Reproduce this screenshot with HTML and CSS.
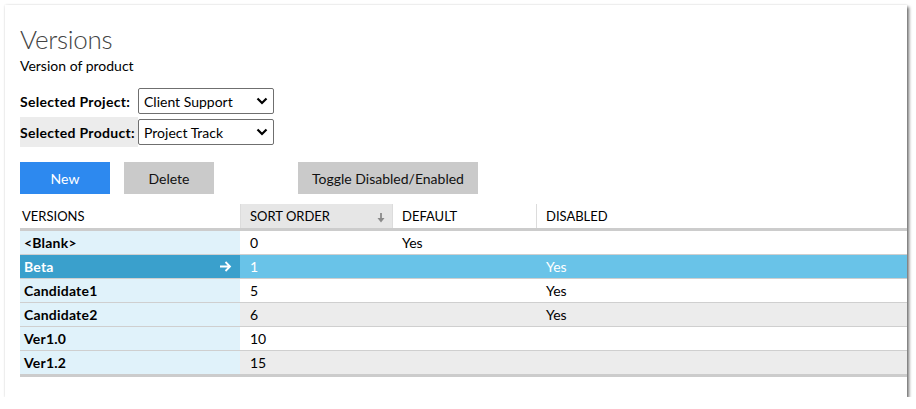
FILE: index.html
```html
<!DOCTYPE html>
<html>
<head>
<meta charset="utf-8">
<link rel="stylesheet" href="styles.css">
</head>
<body>
<div class="panel">
  <h1 class="title">Versions</h1>
  <div class="subtitle">Version of product</div>
  <div class="filters">
    <div class="filter-row">
      <label class="filter-label">Selected Project:</label>
      <div class="select">
        <span>Client Support</span>
        <svg class="chev" width="12" height="8" viewBox="0 0 12 8"><path d="M1.5 1.5 L6 6 L10.5 1.5" fill="none" stroke="#000" stroke-width="2.2"/></svg>
      </div>
    </div>
    <div class="filter-row">
      <label class="filter-label hover">Selected Product:</label>
      <div class="select">
        <span>Project Track</span>
        <svg class="chev" width="12" height="8" viewBox="0 0 12 8"><path d="M1.5 1.5 L6 6 L10.5 1.5" fill="none" stroke="#000" stroke-width="2.2"/></svg>
      </div>
    </div>
  </div>
  <div class="toolbar">
    <button class="btn btn-primary">New</button>
    <button class="btn">Delete</button>
    <button class="btn btn-toggle">Toggle Disabled/Enabled</button>
  </div>
  <div class="grid">
    <div class="row head">
      <div class="c c1">VERSIONS</div>
      <div class="c c2 sorted">SORT ORDER<svg class="sort" width="10" height="12" viewBox="0 0 10 12"><path d="M5 1 V9" fill="none" stroke="#8a8a8a" stroke-width="1.8"/><path d="M1.5 6 L5 10.5 L8.5 6 Z" fill="#8a8a8a"/></svg></div>
      <div class="c c3">DEFAULT</div>
      <div class="c c4">DISABLED</div>
    </div>
    <div class="row">
      <div class="c c1">&lt;Blank&gt;</div>
      <div class="c c2">0</div>
      <div class="c c3">Yes</div>
      <div class="c c4"></div>
    </div>
    <div class="row sel">
      <div class="c c1">Beta<svg class="arrow" width="13" height="11" viewBox="0 0 13 11"><path d="M1 5.5 H11 M6.5 1 L11 5.5 L6.5 10" fill="none" stroke="#fff" stroke-width="1.8"/></svg></div>
      <div class="c c2">1</div>
      <div class="c c3"></div>
      <div class="c c4">Yes</div>
    </div>
    <div class="row">
      <div class="c c1">Candidate1</div>
      <div class="c c2">5</div>
      <div class="c c3"></div>
      <div class="c c4">Yes</div>
    </div>
    <div class="row alt">
      <div class="c c1">Candidate2</div>
      <div class="c c2">6</div>
      <div class="c c3"></div>
      <div class="c c4">Yes</div>
    </div>
    <div class="row">
      <div class="c c1">Ver1.0</div>
      <div class="c c2">10</div>
      <div class="c c3"></div>
      <div class="c c4"></div>
    </div>
    <div class="row alt last">
      <div class="c c1">Ver1.2</div>
      <div class="c c2">15</div>
      <div class="c c3"></div>
      <div class="c c4"></div>
    </div>
  </div>
</div>
</body>
</html>
```
FILE: styles.css
```css
* { box-sizing: border-box; }
html, body { margin: 0; padding: 0; background: #fff; }
body {
  padding: 5px 0 0 5px;
  font-family: Lato, "Open Sans", sans-serif;
  color: #000;
}
.panel {
  width: 902px;
  height: 392px;
  background: #fff;
  padding: 17px 0 0 15px;
  box-shadow: 2px 2px 3px rgba(0,0,0,0.55), 0 0 2px rgba(0,0,0,0.12);
}
.title {
  margin: 0;
  font-size: 26px;
  letter-spacing: -0.3px;
  font-weight: 300;
  color: #444;
  line-height: 34px;
}
.subtitle {
  font-size: 14px;
  line-height: 18px;
  margin-top: 1px;
}
.filters {
  margin-top: 11px;
  display: flex;
  flex-direction: column;
  gap: 1px;
}
.filter-row {
  display: flex;
  align-items: center;
  height: 30px;
}
.filter-label {
  width: 118px;
  height: 30px;
  display: flex;
  align-items: center;
  font-size: 14px;
  letter-spacing: 0.3px;
  font-weight: 700;
}
.filter-label.hover { background: #ececec; }
.select {
  position: relative;
  width: 136px;
  height: 26px;
  border: 1px solid #6f6f6f;
  border-radius: 2px;
  font-size: 14px;
  display: flex;
  align-items: center;
  padding-left: 5px;
  background: #fff;
}
.chev { position: absolute; right: 5px; top: 8px; }
.toolbar {
  margin-top: 15px;
  display: flex;
  height: 32px;
}
.btn {
  border: none;
  height: 32px;
  width: 90px;
  font-family: inherit;
  font-size: 14px;
  background: #cacaca;
  color: #111;
  margin-right: 14px;
  padding: 0;
}
.btn-primary { background: #2d89ef; color: #fff; }
.btn-toggle { width: 180px; margin-left: 70px; }
.grid {
  margin-top: 10px;
  font-size: 14px;
}
.row {
  display: flex;
  height: 24px;
  border-bottom: 1px solid #cfcfcf;
}
.row.head {
  height: 27px;
  border-bottom: 3px solid #cccccc;
  font-size: 13px;
}
.row.last { border-bottom: 3px solid #cccccc; height: 26px; }
.c {
  display: flex;
  align-items: center;
  padding-left: 10px;
  position: relative;
}
.c1 { width: 220px; padding-left: 4px; font-weight: 700; letter-spacing: 0.2px; background: #e0f2fa; }
.c2 { width: 152px; }
.c3 { width: 144px; }
.c4 { flex: 1; }
.head .c { font-weight: 400; letter-spacing: 0; background: #fff; padding-left: 9px; }
.head .c1 { padding-left: 2px; }
.head .c2, .head .c3, .head .c4 { border-left: 1px solid #dcdcdc; }
.head .c2.sorted { background: #e6e6e6; }
.sort { position: absolute; right: 6px; top: 8px; }
.alt .c2, .alt .c3, .alt .c4 { background: #ececec; }
.sel .c1 { background: #3aa0cc; color: #fff; }
.sel .c2, .sel .c3, .sel .c4 { background: #69c3e8; color: #fff; }
.arrow { position: absolute; right: 8px; top: 6px; }
```
